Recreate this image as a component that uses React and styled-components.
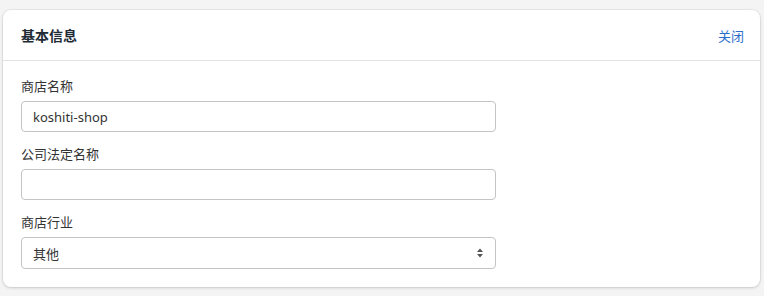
import React from "react";
import styled, { createGlobalStyle } from "styled-components";

const GlobalStyle = createGlobalStyle`
  body {
    margin: 0;
    background: #f4f4f4;
    font-family: "Noto Sans", "Noto Sans CJK SC", sans-serif;
    color: #333;
  }
`;

const Page = styled.div`
  padding: 10px 4px 8px 3px;
`;

const Card = styled.div`
  background: #fff;
  border-radius: 8px;
  box-shadow: 0 0 0 1px rgba(63, 63, 68, 0.05), 0 1px 3px 0 rgba(63, 63, 68, 0.2);
`;

const Header = styled.div`
  display: flex;
  justify-content: space-between;
  align-items: center;
  height: 50px;
  padding: 0 16px 0 18px;
  border-bottom: 1px solid #e1e3e5;
`;

const Title = styled.h2`
  margin: 0;
  font-size: 14px;
  font-weight: 700;
  color: #212b36;
`;

const CloseLink = styled.a`
  font-size: 13px;
  color: #2c6ecb;
  cursor: pointer;
`;

const Body = styled.div`
  padding: 17px 18px 18px;
  display: flex;
  flex-direction: column;
  gap: 14px;
`;

const Field = styled.div`
  display: flex;
  flex-direction: column;
  gap: 6px;
  width: 475px;
`;

const Label = styled.label`
  font-size: 13px;
  line-height: 17px;
  color: #333;
`;

const Input = styled.input`
  box-sizing: border-box;
  height: 31px;
  padding: 0 11px;
  border: 1px solid #c4c4c4;
  border-radius: 4px;
  font-family: inherit;
  font-size: 13px;
  color: #333;
  outline: none;
`;

const SelectBox = styled.div`
  position: relative;
  box-sizing: border-box;
  height: 32px;
  display: flex;
  align-items: center;
  padding: 0 11px;
  border: 1px solid #c4c4c4;
  border-radius: 4px;
  font-size: 13px;
  color: #333;
`;

const Arrow = styled.svg`
  position: absolute;
  right: 11px;
  top: 50%;
  transform: translateY(-50%);
`;

export default function App() {
  return (
    <>
      <GlobalStyle />
      <Page>
        <Card>
          <Header>
            <Title>基本信息</Title>
            <CloseLink>关闭</CloseLink>
          </Header>
          <Body>
            <Field>
              <Label>商店名称</Label>
              <Input defaultValue="koshiti-shop" />
            </Field>
            <Field>
              <Label>公司法定名称</Label>
              <Input defaultValue="" />
            </Field>
            <Field>
              <Label>商店行业</Label>
              <SelectBox>
                其他
                <Arrow width="8" height="10" viewBox="0 0 8 10">
                  <path d="M4 0.5 L7 4 H1 Z M4 9.5 L7 6 H1 Z" fill="#555" />
                </Arrow>
              </SelectBox>
            </Field>
          </Body>
        </Card>
      </Page>
    </>
  );
}
